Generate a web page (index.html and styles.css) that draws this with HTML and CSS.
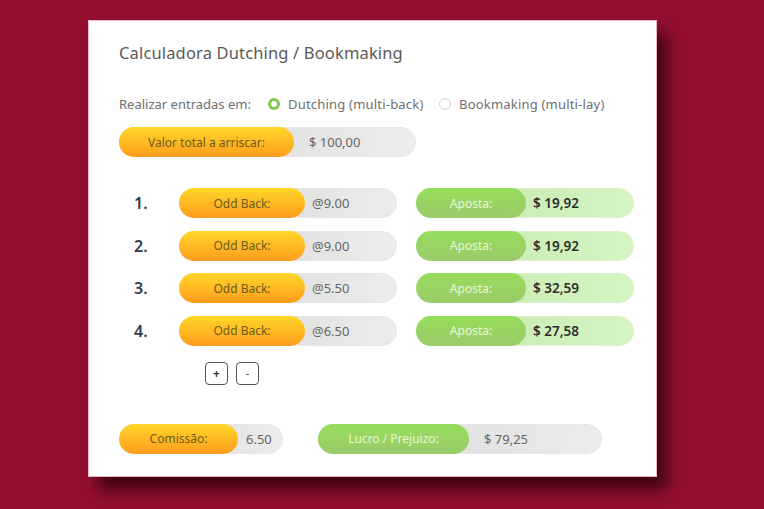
FILE: index.html
```html
<!DOCTYPE html>
<html lang="pt">
<head>
<meta charset="utf-8">
<link rel="stylesheet" href="styles.css">
</head>
<body>
<div class="card">
  <h1 class="title">Calculadora Dutching / Bookmaking</h1>
  <div class="mode">
    <span class="mode-label">Realizar entradas em:</span>
    <span class="radio on"></span><span class="opt opt1">Dutching (multi-back)</span>
    <span class="radio"></span><span class="opt">Bookmaking (multi-lay)</span>
  </div>
  <div class="pill total">
    <span class="seg orange">Valor total a arriscar:</span>
    <span class="val">$ 100,00</span>
  </div>
  <div class="rows">
    <div class="row">
      <span class="num">1.</span>
      <div class="pill odd"><span class="seg orange">Odd Back:</span><span class="val">@9.00</span></div>
      <div class="pill bet"><span class="seg green">Aposta:</span><span class="val bold">$ 19,92</span></div>
    </div>
    <div class="row">
      <span class="num">2.</span>
      <div class="pill odd"><span class="seg orange">Odd Back:</span><span class="val">@9.00</span></div>
      <div class="pill bet"><span class="seg green">Aposta:</span><span class="val bold">$ 19,92</span></div>
    </div>
    <div class="row">
      <span class="num">3.</span>
      <div class="pill odd"><span class="seg orange">Odd Back:</span><span class="val">@5.50</span></div>
      <div class="pill bet"><span class="seg green">Aposta:</span><span class="val bold">$ 32,59</span></div>
    </div>
    <div class="row">
      <span class="num">4.</span>
      <div class="pill odd"><span class="seg orange">Odd Back:</span><span class="val">@6.50</span></div>
      <div class="pill bet"><span class="seg green">Aposta:</span><span class="val bold">$ 27,58</span></div>
    </div>
  </div>
  <div class="buttons">
    <button class="btn">+</button>
    <button class="btn">-</button>
  </div>
  <div class="footer">
    <div class="pill comm"><span class="seg orange">Comissão:</span><span class="val">6.50</span></div>
    <div class="pill profit"><span class="seg green">Lucro / Prejuizo:</span><span class="val">$ 79,25</span></div>
  </div>
</div>
</body>
</html>
```
FILE: styles.css
```css
* { box-sizing: border-box; }
html, body { margin: 0; padding: 0; }
body {
  background: #93102f;
  width: 764px;
  height: 509px;
  overflow: hidden;
  font-family: "Noto Sans", "Open Sans", sans-serif;
  padding: 20px 0 0 88px;
}
.card {
  width: 569px;
  height: 457px;
  background: #fff;
  border: 1px solid #e8b8c4;
  box-shadow: 10px 13px 14px rgba(40, 0, 10, 0.75);
  padding: 20px 0 0 30px;
}
.title {
  margin: 0;
  font-size: 16.5px;
  font-weight: 400;
  color: #5a5a5a;
  height: 24px;
  line-height: 24px;
  letter-spacing: 0.15px;
}
.mode {
  margin-top: 30px;
  display: flex;
  align-items: center;
  font-size: 13px;
  color: #6f6f6f;
  height: 18px;
}
.mode-label { width: 149px; }
.radio {
  width: 12px;
  height: 12px;
  border-radius: 50%;
  border: 1px solid #cfcfcf;
  margin-right: 8px;
  background: #fff;
  flex: none;
}
.radio.on { border: 3px solid #7cc84a; }
.opt1 { width: 151px; }
.opt { letter-spacing: 0.2px; }
.pill {
  display: flex;
  align-items: center;
  height: 30px;
  border-radius: 15px;
  background: linear-gradient(to right, #d7d7d7, #ececec);
  border: 1px solid #e6e6e6;
  font-size: 12px;
}
.seg {
  height: 30px;
  margin: -1px 0 -1px -1px;
  border-radius: 15px;
  display: flex;
  align-items: center;
  justify-content: center;
  flex: none;
}
.orange {
  background: linear-gradient(to bottom, #ffd728, #ff9c1e);
  color: #6b5d1a;
}
.green {
  background: linear-gradient(to bottom, #95dd5a, #9bcb6b);
  color: #e9f7dc;
}
.val {
  color: #666;
  font-size: 13px;
  padding-left: 15px;
}
.val.bold { color: #2d2d2d; font-weight: 600; font-size: 13.5px; padding-left: 7px; }
.total { margin-top: 14px; width: 297px; }
.total .seg { width: 175px; }
.rows {
  margin-top: 31px;
  display: flex;
  flex-direction: column;
  gap: 12.5px;
}
.row { display: flex; align-items: center; height: 30px; }
.num {
  width: 60px;
  padding-left: 15px;
  font-size: 16px;
  font-weight: 600;
  color: #2f3a4d;
}
.odd { width: 218px; }
.odd .seg { width: 126px; }
.odd .val { padding-left: 7px; }
.bet {
  margin-left: 19px;
  width: 218px;
  background: linear-gradient(to right, #c3e7ab, #d6f5c2);
  border-color: #dcefcf;
}
.bet .seg { width: 110px; }
.buttons {
  margin-top: 16px;
  margin-left: 86px;
  display: flex;
  gap: 8px;
}
.btn {
  width: 23px;
  height: 23px;
  padding: 0;
  border: 1.5px solid #555;
  border-radius: 4px;
  background: #fff;
  font-family: inherit;
  font-size: 12px;
  font-weight: 700;
  color: #333;
}
.btn + .btn { font-weight: 400; color: #666; }
.footer {
  margin-top: 39px;
  display: flex;
  gap: 35px;
}
.comm { width: 164px; }
.comm .seg { width: 119px; }
.comm .val { padding-left: 8px; }
.profit { width: 284px; }
.profit .seg { width: 151px; }
```
